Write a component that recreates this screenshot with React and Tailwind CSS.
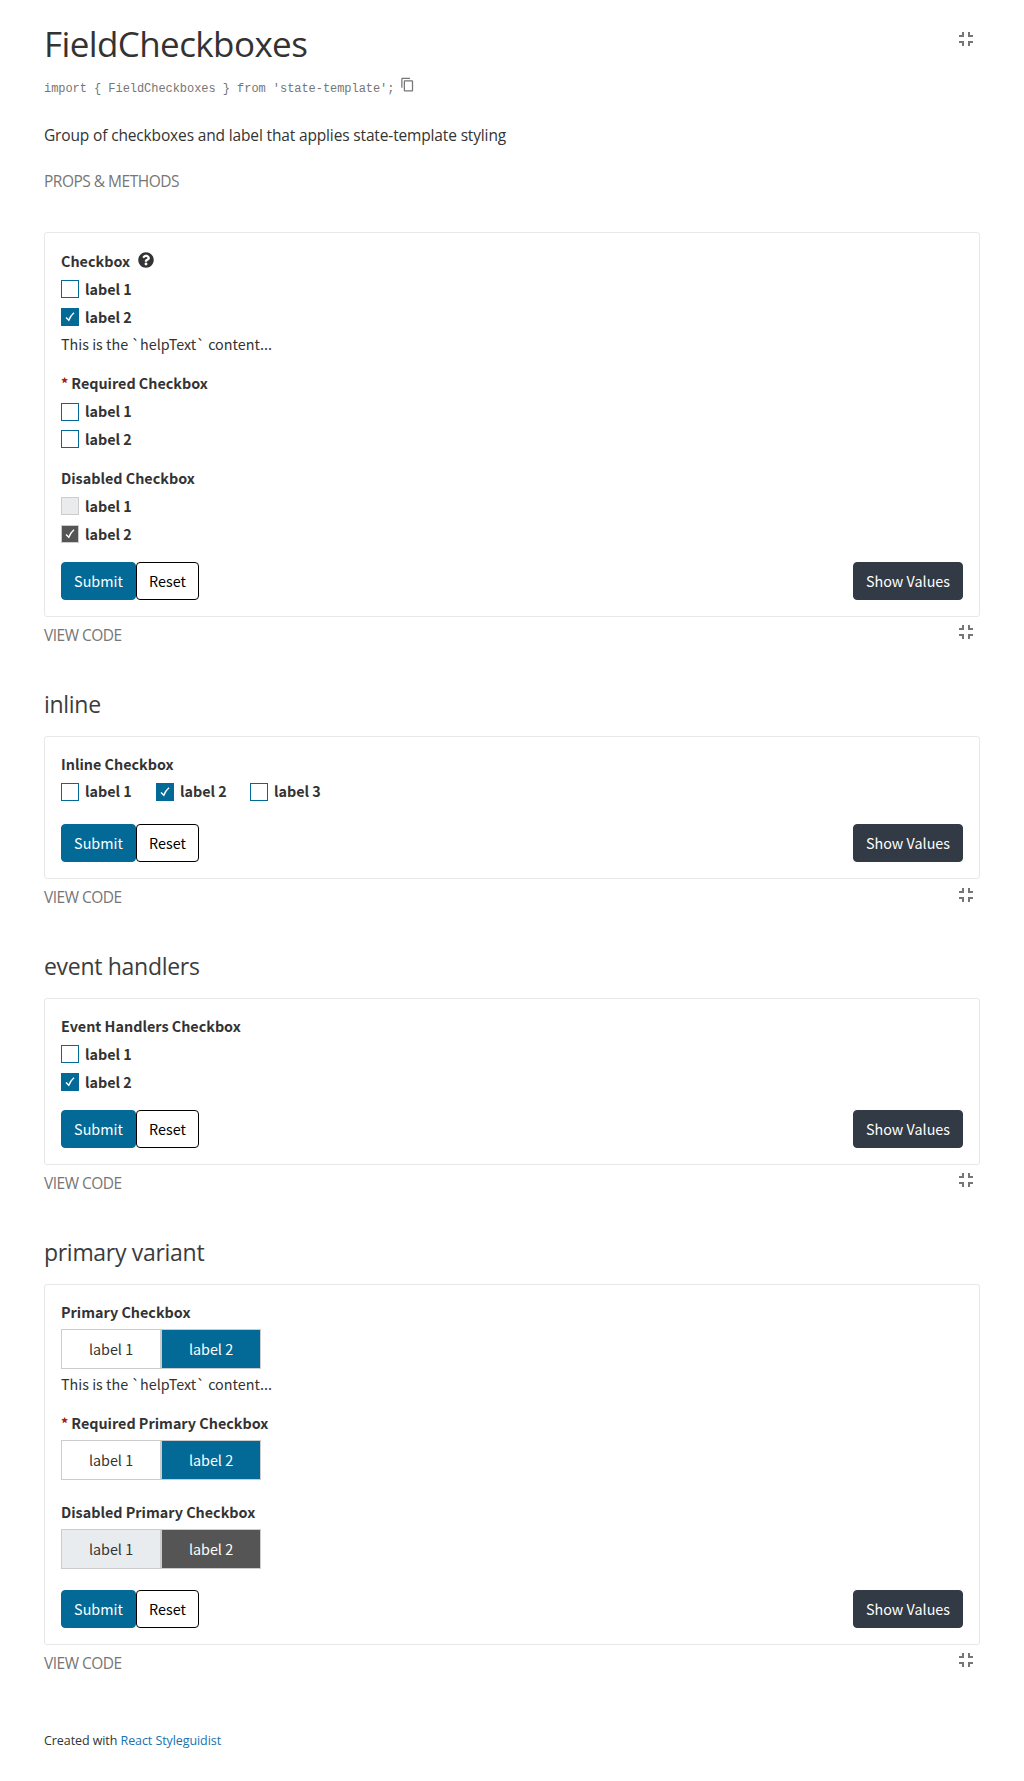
import React, { useState } from "react";
import { MdContentCopy, MdFullscreenExit } from "react-icons/md";
import { FaQuestionCircle } from "react-icons/fa";

function IsolateButton({ className = "" }) {
  return (
    <button type="button" aria-label="Open isolated" className={`size-6 text-[#767676] ${className}`}>
      <MdFullscreenExit size={24} />
    </button>
  );
}

function FieldLabel({ children, required, help }) {
  return (
    <div className="flex h-6 items-start text-[14.35px] leading-6 font-bold text-[#333]">
      {required && <span className="mr-[3px] text-[#9d2213]">*</span>}
      <span>{children}</span>
      {help && <FaQuestionCircle size={16} className="mt-[3px] ml-2" />}
    </div>
  );
}

function boxColors(checked, disabled) {
  if (disabled) return checked ? "border-[#ccc] bg-[#555]" : "border-[#ccc] bg-[#e9ecef]";
  return checked ? "border-[#036a98] bg-[#036a98]" : "border-[#036a98] bg-white";
}

function Check({ label, initial = false, disabled = false, low = false, className = "" }) {
  const [checked, setChecked] = useState(initial);
  return (
    <button
      type="button"
      role="checkbox"
      aria-checked={checked}
      disabled={disabled}
      onClick={() => setChecked(!checked)}
      className={`flex h-6 items-start gap-1.5 text-[14.35px] leading-6 font-bold text-[#333] ${className}`}
    >
      <span className={`block size-[18px] shrink-0 border ${low ? "mt-1" : "mt-[3px]"} ${boxColors(checked, disabled)}`}>
        {checked && (
          <svg viewBox="1 1 16 16" className="block size-4 fill-none stroke-white" strokeWidth="1.4">
            <path d="M5 9.4 L7.8 12.2 Q9.6 7.6 13 4.8" />
          </svg>
        )}
      </span>
      <span>{label}</span>
    </button>
  );
}

function Group({ children, className = "mb-[15px]" }) {
  return <div className={`flex flex-col items-start ${className}`}>{children}</div>;
}

function HelpText({ children }) {
  return <p className="mt-[3px] h-6 text-[14.35px] leading-6 text-[#333]">{children}</p>;
}

function Toggle({ disabled = false }) {
  const base = "flex h-10 w-[100px] items-center justify-center border border-[#ccc] text-[14.35px]";
  return (
    <div className="mt-[5px] flex">
      <div className={`${base} ${disabled ? "bg-[#e9ecef]" : "bg-white"} text-[#333]`}>label 1</div>
      <div className={`${base} ${disabled ? "bg-[#555]" : "bg-[#036a98]"} text-white`}>label 2</div>
    </div>
  );
}

function Actions() {
  const base = "flex h-[38px] items-center justify-center rounded border text-[14.35px]";
  return (
    <div className="flex justify-between">
      <div className="flex">
        <button type="button" className={`${base} w-[75px] border-[#036a98] bg-[#036a98] text-white`}>Submit</button>
        <button type="button" className={`${base} w-[63px] border-black bg-white text-black`}>Reset</button>
      </div>
      <button type="button" className={`${base} w-[110px] border-[#323a45] bg-[#323a45] text-white`}>Show Values</button>
    </div>
  );
}

function Example({ children, top = "pt-[15px]", iconTop = "mt-[3px]" }) {
  return (
    <>
      <div className={`rounded-[3px] border border-[#e8e8e8] px-4 pb-4 font-['Noto_Sans_CJK_SC',sans-serif] ${top}`}>
        {children}
        <Actions />
      </div>
      <div className="flex h-[30px] items-start justify-between pr-0.5">
        <button type="button" className="mt-1.5 text-[15.5px] leading-6 tracking-[-0.5px] text-[#767676]">VIEW CODE</button>
        <IsolateButton className={iconTop} />
      </div>
    </>
  );
}

function Heading({ children }) {
  return <h2 className="mt-[41px] mb-4 text-[23px] leading-8 tracking-[-0.3px] text-[#3c3c3c]">{children}</h2>;
}

export default function App() {
  return (
    <main className="h-[1781px] bg-white px-11 pt-[21px] font-['Open_Sans',sans-serif] text-[#333]">
      <header>
        <div className="flex h-11 items-start justify-between pr-0.5">
          <h1 className="pt-px text-[35px] leading-[44px] tracking-[-0.6px]">FieldCheckboxes</h1>
          <IsolateButton className="mt-1.5" />
        </div>
        <div className="mt-3.5 flex h-5 items-start gap-[6px] text-[#767676]">
          <code className="font-['Liberation_Mono',monospace] text-[12px] leading-5 tracking-[-0.05px] whitespace-pre">
            {"import { FieldCheckboxes } from 'state-template';"}
          </code>
          <MdContentCopy size={15} className="-mt-0.5" />
        </div>
        <p className="mt-6 text-[15.5px] leading-6 tracking-[-0.15px]">
          Group of checkboxes and label that applies state-template styling
        </p>
        <button type="button" className="mt-[22px] mb-[39px] block text-[15.5px] leading-6 tracking-[-0.5px] text-[#767676]">
          PROPS &amp; METHODS
        </button>
      </header>

      <Example top="pt-4">
        <Group>
          <FieldLabel help>Checkbox</FieldLabel>
          <Check label="label 1" className="mt-1" />
          <Check label="label 2" initial className="mt-1" />
          <HelpText>This is the `helpText` content...</HelpText>
        </Group>
        <Group>
          <FieldLabel required>Required Checkbox</FieldLabel>
          <Check label="label 1" low className="mt-1" />
          <Check label="label 2" className="mt-1" />
        </Group>
        <Group className="mb-4">
          <FieldLabel>Disabled Checkbox</FieldLabel>
          <Check label="label 1" disabled className="mt-1" />
          <Check label="label 2" disabled initial className="mt-1" />
        </Group>
      </Example>

      <Heading>inline</Heading>
      <Example iconTop="mt-1">
        <Group className="mb-[21px]">
          <FieldLabel>Inline Checkbox</FieldLabel>
          <div className="mt-[3px] flex">
            <Check label="label 1" low className="w-[95px]" />
            <Check label="label 2" low initial className="w-[94px]" />
            <Check label="label 3" low />
          </div>
        </Group>
      </Example>

      <Heading>event handlers</Heading>
      <Example>
        <Group className="mb-4">
          <FieldLabel>Event Handlers Checkbox</FieldLabel>
          <Check label="label 1" className="mt-1" />
          <Check label="label 2" initial className="mt-1" />
        </Group>
      </Example>

      <Heading>primary variant</Heading>
      <Example>
        <Group>
          <FieldLabel>Primary Checkbox</FieldLabel>
          <Toggle />
          <HelpText>This is the `helpText` content...</HelpText>
        </Group>
        <Group className="mb-5">
          <FieldLabel required>Required Primary Checkbox</FieldLabel>
          <Toggle />
        </Group>
        <Group className="mb-[21px]">
          <FieldLabel>Disabled Primary Checkbox</FieldLabel>
          <Toggle disabled />
        </Group>
      </Example>

      <footer className="mt-14 text-[12.5px] leading-5 tracking-[-0.08px]">
        Created with <a href="#" className="text-[#1673b1]">React Styleguidist</a>
      </footer>
    </main>
  );
}
